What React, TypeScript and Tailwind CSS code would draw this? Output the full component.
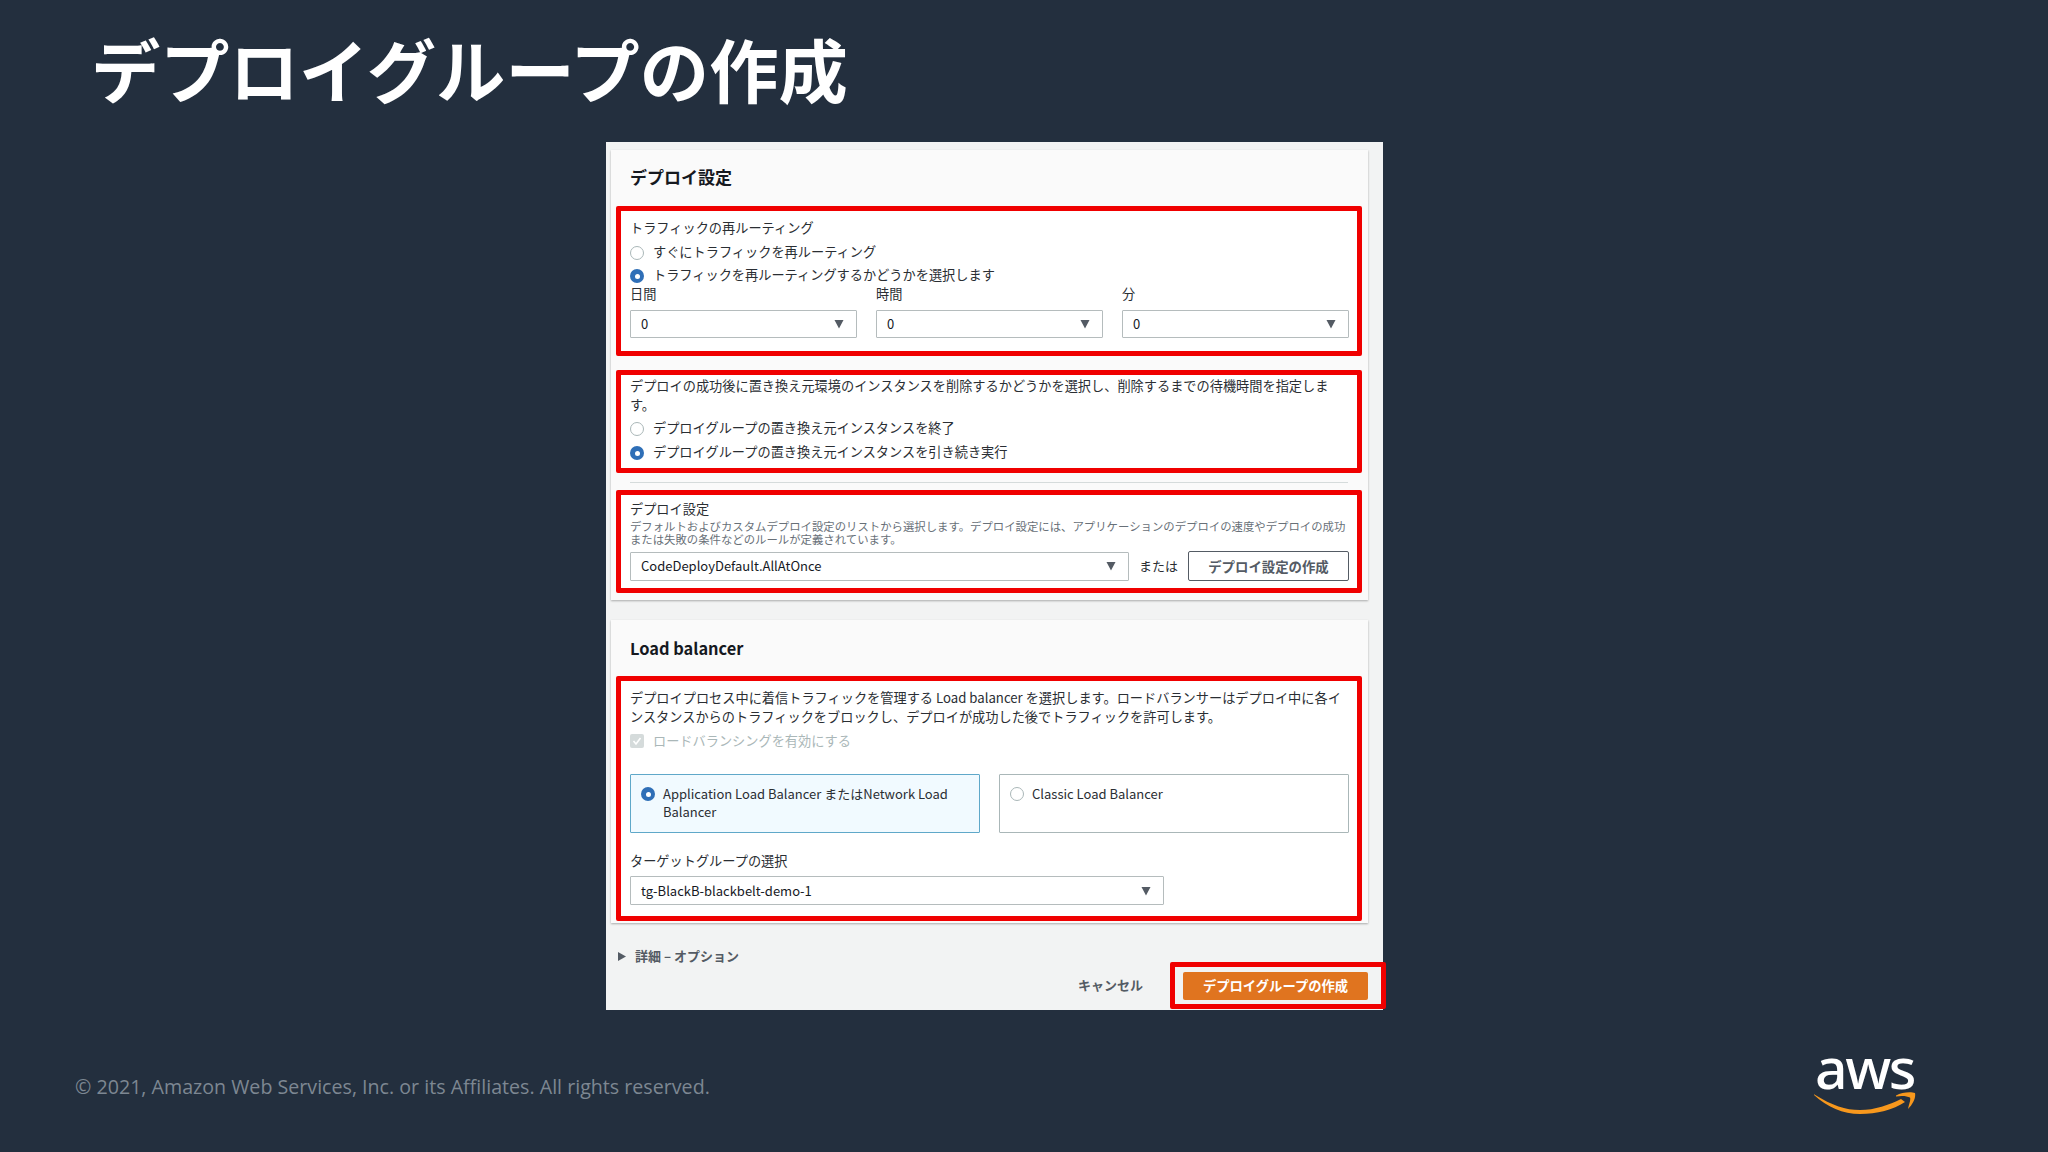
const jp = "font-['Noto_Sans_CJK_JP','Noto_Sans',sans-serif]";

function Caret({ className = "" }: { className?: string }) {
  return (
    <svg viewBox="0 0 10 10" className={`w-[10px] h-[10px] shrink-0 ${className}`}>
      <polygon points="0.5,1 9.5,1 5,9.5" fill="#545b64" />
    </svg>
  );
}

function Radio({ on = false }: { on?: boolean }) {
  return on ? (
    <span className="w-[14px] h-[14px] rounded-full bg-[#2f6fb7] shrink-0 flex items-center justify-center">
      <span className="w-[5px] h-[5px] rounded-full bg-white" />
    </span>
  ) : (
    <span className="w-[14px] h-[14px] rounded-full bg-white border border-[#aab7b8] shrink-0 block" />
  );
}

function RadioRow({ on, label, h }: { on?: boolean; label: string; h: string }) {
  return (
    <div className={`flex items-center gap-[9px] text-[13.2px] text-[#2a2e33] ${h}`}>
      <Radio on={on} />
      <span className="pb-[3px]">{label}</span>
    </div>
  );
}

function Select({ value, w }: { value: string; w: string }) {
  return (
    <div
      className={`flex items-center justify-between pl-[10px] pr-[12px] bg-white border border-[#b5bcbd] rounded-[1px] text-[13px] text-[#16191f] shrink-0 ${w}`}
    >
      <span>{value}</span>
      <Caret />
    </div>
  );
}

function RedBox({ h, children }: { h: string; children: React.ReactNode }) {
  return (
    <div className={`ml-[5px] w-[746px] bg-white border-[5px] border-[#f00000] rounded-[2px] pl-[9px] pr-[8px] ${h}`}>
      {children}
    </div>
  );
}

function TimeField({ label }: { label: string }) {
  return (
    <div className="w-[227px]">
      <div className="h-[12px] flex items-center pb-[1px] text-[13.2px] text-[#2a2e33]">{label}</div>
      <Select value="0" w="w-[227px] h-[28px] mt-[10px]" />
    </div>
  );
}

export default function App() {
  return (
    <div className={`w-[2048px] h-[1152px] overflow-hidden bg-[#232f3e] ${jp}`}>
      {/* Slide title */}
      <div className="h-[142px] pl-[91px] pt-[22px]">
        <h1 className="text-[69.3px] leading-[92px] font-bold text-white">デプロイグループの作成</h1>
      </div>

      {/* Console screenshot */}
      <div className="ml-[606px] w-[777px] h-[868px] bg-[#f2f3f3] pt-[8px] pl-[5px]">
        <div className="w-[757px] h-[450px] bg-[#fafafa] shadow-[0_1px_2px_rgba(0,0,0,0.3)]">
          <div className="h-[56px] flex items-center pl-[19px] pb-[3px] text-[17px] font-bold text-[#16191f]">
            デプロイ設定
          </div>
          <RedBox h="h-[150px]">
            <div className="h-[31px] pt-[2px] flex items-center text-[13.2px] text-[#2a2e33]">
              トラフィックの再ルーティング
            </div>
            <RadioRow label="すぐにトラフィックを再ルーティング" h="h-[22px]" />
            <RadioRow on label="トラフィックを再ルーティングするかどうかを選択します" h="h-[24px]" />
            <div className="flex gap-[19px]">
              <TimeField label="日間" />
              <TimeField label="時間" />
              <TimeField label="分" />
            </div>
          </RedBox>
          <div className="mt-[14px]">
            <RedBox h="h-[103px]">
              <p className="pt-[1px] text-[13.2px] leading-[19px] text-[#2a2e33]">
                デプロイの成功後に置き換え元環境のインスタンスを削除するかどうかを選択し、削除するまでの待機時間を指定します。
              </p>
              <RadioRow label="デプロイグループの置き換え元インスタンスを終了" h="h-[24px] mt-[3px]" />
              <RadioRow on label="デプロイグループの置き換え元インスタンスを引き続き実行" h="h-[24px]" />
            </RedBox>
          </div>
          <div className="ml-[19px] w-[718px] h-px bg-[#d5dbdb] mt-[9px]" />
          <div className="mt-[7px]">
            <RedBox h="h-[103px]">
              <div className="h-[22px] pt-[6px] flex items-center text-[13.2px] text-[#2a2e33]">デプロイ設定</div>
              <p className="text-[11.38px] leading-[13px] text-[#687078] whitespace-nowrap pt-[3px]">
                デフォルトおよびカスタムデプロイ設定のリストから選択します。デプロイ設定には、アプリケーションのデプロイの速度やデプロイの成功
                <br />
                または失敗の条件などのルールが定義されています。
              </p>
              <div className="flex items-center mt-[5px]">
                <Select value="CodeDeployDefault.AllAtOnce" w="w-[499px] h-[29px]" />
                <span className="w-[59px] text-center text-[13px] text-[#2a2e33]">または</span>
                <button className="w-[161px] h-[30px] bg-white border-[1.5px] border-[#545b64] rounded-[2px] text-[13.4px] font-bold text-[#545b64]">
                  デプロイ設定の作成
                </button>
              </div>
            </RedBox>
          </div>
        </div>

        <div className="mt-[20px] w-[757px] h-[303px] bg-[#fafafa] shadow-[0_1px_2px_rgba(0,0,0,0.3)]">
          <div className="h-[56px] flex items-center pl-[19px] text-[16.4px] font-bold text-[#16191f]">
            Load balancer
          </div>
          <RedBox h="h-[245px]">
            <p className="pt-[7px] text-[13.2px] leading-[19px] text-[#2a2e33]">
              デプロイプロセス中に着信トラフィックを管理する Load balancer を選択します。ロードバランサーはデプロイ中に各インスタンスからのトラフィックをブロックし、デプロイが成功した後でトラフィックを許可します。
            </p>
            <div className="h-[24px] flex items-center gap-[9px] mt-[3px] text-[13.2px] text-[#aab7b8]">
              <span className="w-[14px] h-[14px] bg-[#d5dbdb] rounded-[2px] flex items-center justify-center shrink-0">
                <svg viewBox="0 0 14 14" className="w-[14px] h-[14px]">
                  <path d="M3.5 7 L6 10 L10.5 4" fill="none" stroke="#ffffff" strokeWidth="1.6" />
                </svg>
              </span>
              <span>ロードバランシングを有効にする</span>
            </div>
            <div className="flex gap-[19px] mt-[21px]">
              <div className="w-[350px] h-[59px] bg-[#f1faff] border border-[#5fa8c9] flex gap-[8px] pl-[10px] pt-[10px] text-[13px] leading-[18px] text-[#2a2e33] rounded-[1px]">
                <span className="mt-[2px] shrink-0">
                  <Radio on />
                </span>
                <span className="w-[300px]">Application Load Balancer またはNetwork Load Balancer</span>
              </div>
              <div className="w-[350px] h-[59px] bg-white border border-[#aab7b8] flex gap-[8px] pl-[10px] pt-[10px] text-[13px] leading-[18px] text-[#2a2e33] rounded-[1px]">
                <span className="mt-[2px] shrink-0">
                  <Radio />
                </span>
                <span>Classic Load Balancer</span>
              </div>
            </div>
            <div className="h-[20px] mt-[18px] flex items-center text-[13.2px] text-[#2a2e33]">ターゲットグループの選択</div>
            <Select value="tg-BlackB-blackbelt-demo-1" w="w-[534px] h-[29px] mt-[5px]" />
          </RedBox>
        </div>

        <div className="mt-[26px] h-[14px] flex items-center gap-[8px] pl-[6px] text-[13px] font-bold text-[#545b64]">
          <svg viewBox="0 0 10 10" className="w-[10px] h-[11px] mt-px">
            <polygon points="1,0.5 9,5 1,9.5" fill="#545b64" />
          </svg>
          <span>詳細 – オプション</span>
        </div>
        <div className="w-[775px] h-[47px] -mt-[1px] flex items-center justify-end">
          <span className="text-[13px] font-bold text-[#545b64] mr-[27px] pb-[1px]">キャンセル</span>
          <div className="w-[216px] h-[47px] border-[5px] border-[#f00000] rounded-[2px] bg-[#f2f3f3] flex items-center pl-[8px]">
            <button className="w-[185px] h-[28px] bg-[#e0741f] rounded-[2px] text-[13.3px] font-bold text-white">
              デプロイグループの作成
            </button>
          </div>
        </div>
      </div>

      {/* Slide footer */}
      <div className="flex justify-between items-start pl-[75px] pr-[132px] pt-[35px]">
        <span className="mt-[28px] text-[19.65px] leading-[28px] text-[#7d8792] font-['Open_Sans',sans-serif]">
          © 2021, Amazon Web Services, Inc. or its Affiliates. All rights reserved.
        </span>
        <div className="w-[103px] flex flex-col items-center">
          <span className="text-[57px] leading-[44px] tracking-[-2.4px] font-medium text-white font-['Noto_Sans',sans-serif]">aws</span>
          <svg viewBox="0 0 103 24" className="w-[103px] h-[24px] mt-[3px]">
            <path d="M1 2.3 C 20 14, 32 18, 47 18 C 62 18, 76 13, 88 7 L 92 10 C 80 18, 64 22, 47 22 C 30 22, 14 15, 1 3 Z" fill="#f7981d" />
            <path d="M83 3.5 C 89 0, 98 -0.5, 102 1 C 103 6, 100 12, 95 17 C 96 12, 98 8, 97 5.5 C 94 4, 89 3.5, 83 4.5 Z" fill="#f7981d" />
          </svg>
        </div>
      </div>
    </div>
  );
}
